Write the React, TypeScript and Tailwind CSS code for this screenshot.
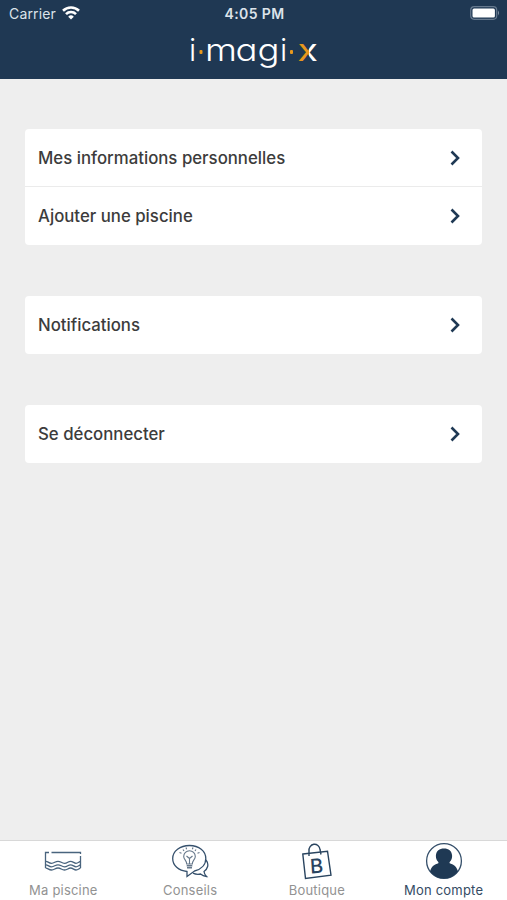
import type { ReactNode } from "react";

function Logo() {
  return (
    <svg width="137" height="46" viewBox="184.500 25.500 137 46" className="block overflow-visible" aria-label="i-magi-x">
      <defs>
        <linearGradient id="cross" x1="0" x2="1" y1="0" y2="0">
          <stop offset="0.54" stopColor="#e8981d" />
          <stop offset="0.54" stopColor="#fff" />
        </linearGradient>
      </defs>
      <g
        fill="#fff"
        fontFamily="Inter, sans-serif"
        fontSize="31"
        fontWeight="350"
        style={{ fontFeatureSettings: '"cv11"' }}
      >
        <text x="188.500" y="60">i</text>
        <text x="204.500" y="60" textLength="32" lengthAdjust="spacingAndGlyphs">m</text>
        <text x="235" y="60" textLength="22" lengthAdjust="spacingAndGlyphs">a</text>
        <text x="257" y="60" textLength="22" lengthAdjust="spacingAndGlyphs">g</text>
        <text x="279.500" y="60">i</text>
        <text x="297" y="60" textLength="20.500" lengthAdjust="spacingAndGlyphs" fontWeight="400" fill="url(#cross)">x</text>
      </g>
      <rect x="199" y="49.500" width="3" height="4" rx="1" fill="#e8981d" />
      <rect x="289.500" y="49.500" width="3" height="4" rx="1" fill="#e8981d" />
    </svg>
  );
}

function StatusBar() {
  return (
    <div className="grid h-[26px] grid-cols-3 items-center pl-[9px] pr-[7px] text-[14px] text-[#dce3ea]">
      <div className="flex items-center gap-[6px]">
        <span className="tracking-[0.15px]">Carrier</span>
        <svg width="18" height="14" viewBox="0 0 18 14" fill="none" stroke="#fff" strokeWidth="2.6">
          <path d="M1 4.700A11.500 11.500 0 0 1 17 4.700" />
          <path d="M4 8.100A7 7 0 0 1 14 8.100" />
          <path d="M9 13.500 6.200 10.700A4 4 0 0 1 11.800 10.700Z" fill="#fff" stroke="none" />
        </svg>
      </div>
      <div className="text-center font-semibold tracking-[0.4px]">4:05 PM</div>
      <svg width="30" height="14" viewBox="0 0 30 14" className="justify-self-end">
        <rect x="0.700" y="0.700" width="26" height="12.600" rx="3.500" fill="none" stroke="#66798e" strokeWidth="1.200" />
        <rect x="2.500" y="2.500" width="22.400" height="9" rx="1.500" fill="#fff" />
        <path d="M28 4.600Q30 7 28 9.400Z" fill="#8493a4" />
      </svg>
    </div>
  );
}

function Row({ label }: { label: string }) {
  return (
    <button className="flex h-[58px] w-full items-center justify-between pl-[13px] pr-[21px] text-left text-[16.800px] font-medium text-[#3c3c3c]">
      <span className="pt-[2px]">{label}</span>
      <svg width="11" height="16" viewBox="0 0 11 16" fill="none" stroke="#1f3954" strokeWidth="2.600">
        <path d="M1.500 1.500 8 8 1.500 14.500" />
      </svg>
    </button>
  );
}

function Group({ labels }: { labels: string[] }) {
  return (
    <div className="divide-y divide-[#ebebeb] overflow-hidden rounded bg-white">
      {labels.map((label) => (
        <Row key={label} label={label} />
      ))}
    </div>
  );
}

function PoolIcon() {
  return (
    <svg width="38" height="20" viewBox="0 0 38 20" fill="none" stroke="#49647e" strokeWidth="1.300">
      <path d="M5 1.500H1.500V17M7.500 1.500H36.500V3M36.500 5V17" />
      <path d="M1.500 10.500c2-.6 3 1.800 6 1.800s3.500-2 6.500-2 3.500 2 6.500 2 3.500-2 6-2 3.500 2 5.500 2 3-1.500 4.500-1.800" />
      <path d="M1.500 14c2-.6 3 1.800 6 1.800s3.500-2 6.500-2 3.500 2 6.500 2 3.500-2 6-2 3.500 2 5.500 2 3-1.500 4.500-1.800" />
      <path d="M1.500 17.200c2-.6 3 1.800 6 1.800s3.500-2 6.500-2 3.500 2 6.500 2 3.500-2 6-2 3.500 2 5.500 2 3-1.500 4.500-1.800" />
    </svg>
  );
}

function TipsIcon() {
  return (
    <svg width="38" height="36" viewBox="0 0 38 36" fill="none" stroke="#36516d" strokeWidth="1.300">
      <path d="M16 28.500C7.500 27.500 1.700 22.500 1.700 15.500 1.700 8 9 2.500 18.500 2.500s16.300 5.500 16.300 13c0 6-4.300 10.800-11.300 12.500L16 33.500Z" />
      <path d="M35 17c3.500 4.500 1.500 9-2 11.500.2 2 1 3.500 2.500 5-2.500-.3-4.500-1.200-6-2.500-2.500.7-5 .4-7.500-.8" />
      <g stroke="#65778a" strokeWidth="1.100">
        <path d="M15.700 21c0-3.500-3-4.500-3-7.500a5.800 5.800 0 0 1 11.600 0c0 3-3 4-3 7.500Z" />
        <path d="m15.500 13 3 2.500 3-2.500M18.500 15.500V21M12 6.500l1 1.500M15 4.500l.6 1.700M22 4.500l-.6 1.700M25 6.500 24 8M8.500 9.500l2 .7M28.500 9.500l-2 .7" />
        <path d="M15.700 22.800h5.600M16 24.800h5" strokeWidth="1.500" />
      </g>
    </svg>
  );
}

function ShopIcon() {
  return (
    <svg width="32" height="38" viewBox="0 0 32 38" fill="none" stroke="#29445f" strokeWidth="1.400">
      <path d="M1.800 12 26.500 9.200 30 33.200 4.500 36.500Z" />
      <path d="M8 14V9a5.500 6 0 0 1 11-1.500l1 5" />
      <text
        x="9"
        y="31"
        fontFamily="Inter, sans-serif"
        fontSize="20"
        fontWeight="500"
        fill="#29445f"
        stroke="none"
        transform="rotate(-4 16 24)"
      >
        B
      </text>
    </svg>
  );
}

function AccountIcon() {
  return (
    <svg width="38" height="38" viewBox="0 0 38 38">
      <circle cx="19" cy="19" r="17.400" fill="#fff" stroke="#36506b" strokeWidth="1.300" />
      <path
        d="M5 29.500C6.500 24.500 9 22.800 12.800 21.500c.8-.3.9-1 .3-1.800C11.300 18 10.800 16 10.900 13.500 11.200 9 14.300 6.500 19 6.500s7.800 2.500 8.100 7c.1 2.500-.4 4.500-2.200 6.200-.6.800-.5 1.500.3 1.800C29 22.800 31.500 24.500 33 29.500A17.400 17.400 0 0 1 5 29.500Z"
        fill="#1f3954"
      />
    </svg>
  );
}

function Tab({ icon, label, active = false }: { icon: ReactNode; label: string; active?: boolean }) {
  return (
    <button className="flex flex-col items-center">
      <span className="flex h-[40px] items-center justify-center">{icon}</span>
      <span className={"mt-px text-[13px] leading-4 tracking-[0.2px] " + (active ? "text-[#344b64]" : "text-[#929292]")}>
        {label}
      </span>
    </button>
  );
}

export default function App() {
  return (
    <div className="flex h-screen flex-col bg-[#eee] font-[Inter,sans-serif]">
      <header className="h-[79px] bg-[#1f3853]">
        <StatusBar />
        <div className="flex justify-center">
          <Logo />
        </div>
      </header>

      <main className="flex flex-1 flex-col gap-[51px] px-[25px] pt-[50px]">
        <Group labels={["Mes informations personnelles", "Ajouter une piscine"]} />
        <Group labels={["Notifications"]} />
        <Group labels={["Se déconnecter"]} />
      </main>

      <nav className="grid h-[60px] grid-cols-4 border-t border-[#d8d8d8] bg-white">
        <Tab icon={<PoolIcon />} label="Ma piscine" />
        <Tab icon={<TipsIcon />} label="Conseils" />
        <Tab icon={<ShopIcon />} label="Boutique" />
        <Tab icon={<AccountIcon />} label="Mon compte" active />
      </nav>
    </div>
  );
}
